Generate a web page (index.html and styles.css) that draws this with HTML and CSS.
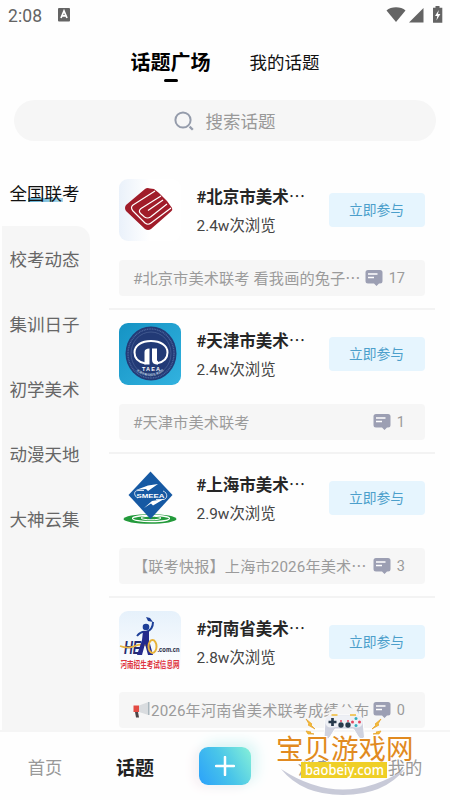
FILE: index.html
```html
<!DOCTYPE html>
<html lang="zh-CN">
<head>
    <meta charset="UTF-8">
    <meta name="viewport" content="width=device-width, initial-scale=1.0">
    <title>话题广场</title>
    <link rel="stylesheet" href="styles.css">
</head>
<body>

<svg width="0" height="0" class="defs">
    <symbol id="comment" viewBox="0 0 18 18">
        <path d="M3 1h12q2.500 0 2.500 2.500v8.500q0 2.500-2.500 2.500h-1l-2.500 2.500-2.500-2.500H3Q.5 14.500.5 12V3.500Q.5 1 3 1z" fill="#9c9fb3"/>
        <path d="M3 5h9.500M3 8.500h6" stroke="#fff" stroke-width="1.300"/>
    </symbol>
</svg>

<!-- Status bar -->
<header class="status-bar">
    <span class="time">2:08</span>
    <svg class="app-badge" width="12" height="14" viewBox="0 0 12 14">
        <rect width="12" height="13.500" rx="1" fill="#646464"/>
        <path d="M3 10 6 3l3 7M4.200 7.800h3.600" fill="none" stroke="#fff" stroke-width="1.700"/>
    </svg>
    <svg class="signals" width="57" height="18" viewBox="0 0 57 18">
        <path d="M.5 4.500C5 .2 15 .2 19.500 4.500L10 16z" fill="#646464"/>
        <path d="M37.500 2v14.500H23z" fill="#646464"/>
        <path d="M49.500 0h4v1.700h2.800v15H47v-15h2.500z" fill="#646464"/>
        <path d="M52.800 4 49 10h2.300l-.9 4.500L54.400 8H52z" fill="#fff"/>
    </svg>
</header>

<!-- Tabs -->
<nav class="tabs">
    <a class="tab active">话题广场</a>
    <a class="tab">我的话题</a>
</nav>

<div class="search">
    <svg width="20" height="20" viewBox="0 0 20 20" fill="none" stroke="#959cab" stroke-width="2">
        <circle cx="9" cy="9" r="7.600"/>
        <path d="m15.600 15.600 3.200 3.200" stroke-width="2.300"/>
    </svg>
    <span>搜索话题</span>
</div>

<main class="content">
    <aside class="sidebar">
        <div class="category current"><span>全国联考</span></div>
        <div class="category-list">
            <div class="category">校考动态</div>
            <div class="category">集训日子</div>
            <div class="category">初学美术</div>
            <div class="category">动漫天地</div>
            <div class="category">大神云集</div>
        </div>
    </aside>

    <section class="topics">
        <article class="topic">
            <div class="topic-head">
                <svg class="avatar" viewBox="0 0 62 62">
                    <defs>
                        <linearGradient id="bj" x2="1"><stop stop-color="#eaf1fa"/><stop offset=".5" stop-color="#fff"/></linearGradient>
                    </defs>
                    <rect width="62" height="62" fill="url(#bj)"/>
                    <path d="M26 10q2-1.500 5-.5l4 .5 5 4 4 4 4 4 5 7q1 2-1 3.500L32 50q-3 2-6 0L7 32q-2-3 0-6z" fill="#a01c2a"/>
                    <g fill="none" stroke="#fff" stroke-width="1.200" stroke-linejoin="round">
                        <path d="M36 12 14 26q-3 2.500 0 6l12 12q3 2.500 6 0l20-15"/>
                        <path d="M42 17 22 29.500q-3 2.500-.5 5l4 3.500q3 2 6 0L48 25"/>
                        <path d="M44 21 29 31.500"/>
                    </g>
                </svg>
                <div class="info">
                    <h2>#北京市美术<span class="dots">…</span></h2>
                    <p>2.4w次浏览</p>
                </div>
                <button class="join">立即参与</button>
            </div>
            <div class="post">
                <span class="post-text">#北京市美术联考 看我画的兔子<span class="dots">…</span></span>
                <svg class="comment"><use href="#comment"/></svg>
                <span class="count">17</span>
            </div>
        </article>

        <article class="topic">
            <div class="topic-head">
                <svg class="avatar" viewBox="0 0 62 62">
                    <defs>
                        <path id="ring" d="M10.500 32a20.500 21 0 0 0 41 0"/>
                        <linearGradient id="tj" x2="1" y2="1"><stop stop-color="#1593c4"/><stop offset="1" stop-color="#32b2df"/></linearGradient>
                    </defs>
                    <rect width="62" height="62" fill="url(#tj)"/>
                    <ellipse cx="32" cy="30.500" rx="25.500" ry="27" fill="#223a76"/>
                    <ellipse cx="32" cy="30.500" rx="23" ry="24.500" fill="none" stroke="#4d669d" stroke-width="1.400" stroke-dasharray="1 .7"/>
                    <ellipse cx="32" cy="30.500" rx="20" ry="21.500" fill="none" stroke="#566d9f" stroke-width=".6"/>
                    <path d="M26.500 40.500C18 39 15.500 34 15.500 29.500c0-7 7-11.500 16.500-11.500s16.500 4.500 16.500 11.500c0 4.500-2.500 9.500-11 11" fill="none" stroke="#fff" stroke-width="2"/>
                    <path d="M25.500 41.500V29q0-3.500 5-3.500v16zM39 41.500q-6 0-6-4.500V25.500h5V37q0 1 1 1z" fill="#fff"/>
                    <text x="32" y="48" text-anchor="middle" font-size="5.500" font-weight="700" fill="#fff" textLength="18">TAEA</text>
                    <text font-size="3" fill="#dce4f2"><textPath href="#ring" startOffset="27%">天津市教育招生考试院</textPath></text>
                </svg>
                <div class="info">
                    <h2>#天津市美术<span class="dots">…</span></h2>
                    <p>2.4w次浏览</p>
                </div>
                <button class="join">立即参与</button>
            </div>
            <div class="post">
                <span class="post-text">#天津市美术联考</span>
                <svg class="comment"><use href="#comment"/></svg>
                <span class="count">1</span>
            </div>
        </article>

        <article class="topic">
            <div class="topic-head">
                <svg class="avatar" viewBox="0 0 62 62">
                    <ellipse cx="31" cy="52" rx="26.500" ry="4.800" fill="#239a3b"/>
                    <ellipse cx="32" cy="51.500" rx="18.500" ry="3.100" fill="none" stroke="#fff" stroke-width="1.200"/>
                    <ellipse cx="32" cy="51" rx="10" ry="1.800" fill="none" stroke="#fff"/>
                    <path d="M31.500 4.500 53.500 28 31.500 52 9.500 28z" fill="#1659a3"/>
                    <path d="M17 23 29 18.500 39 17 29 24 27 22zM25 41l8-7 12-2-11 6.500-2-2z" fill="#fff"/>
                    <path d="M25 23.500h-6c-5 0-4 6 0 7.500M37 32.500h7c5 0 5-7 0-8.500" fill="none" stroke="#fff" stroke-width=".8"/>
                    <text x="31.500" y="30.500" text-anchor="middle" font-size="6" font-weight="700" fill="#fff" textLength="28" lengthAdjust="spacingAndGlyphs">SMEEA</text>
                </svg>
                <div class="info">
                    <h2>#上海市美术<span class="dots">…</span></h2>
                    <p>2.9w次浏览</p>
                </div>
                <button class="join">立即参与</button>
            </div>
            <div class="post">
                <span class="post-text">【联考快报】上海市2026年美术<span class="dots">…</span></span>
                <svg class="comment"><use href="#comment"/></svg>
                <span class="count">3</span>
            </div>
        </article>

        <article class="topic">
            <div class="topic-head">
                <svg class="avatar" viewBox="0 0 62 62">
                    <defs>
                        <linearGradient id="hn" x2="0" y2="1"><stop stop-color="#e6f1fb"/><stop offset="1" stop-color="#fff"/></linearGradient>
                    </defs>
                    <rect width="62" height="62" fill="url(#hn)"/>
                    <text x="5" y="43" font-size="19" font-weight="700" font-style="italic" fill="#232a70" textLength="17" lengthAdjust="spacingAndGlyphs">HE</text>
                    <path d="M1 35q8 3 15 0t15 1" fill="none" stroke="#e8b33c" stroke-width="1.700"/>
                    <circle cx="27" cy="16" r="3.300" fill="#1d3f98"/>
                    <path d="m27 6 4 1 3 4-5-1z" fill="#1d3f98"/>
                    <path d="M18 25q4-5 9-4 7-2 7-10" fill="none" stroke="#1d3f98" stroke-width="2"/>
                    <path d="M24 20h6v9l4 15h-5l-3-11-3 11h-5l5-15z" fill="#232a8c"/>
                    <ellipse cx="33.500" cy="35.500" rx="4" ry="6.500" fill="none" stroke="#e8b33c" stroke-width="2"/>
                    <text x="38.500" y="41" font-size="8" font-weight="700" fill="#20233c" textLength="22" lengthAdjust="spacingAndGlyphs">.com.cn</text>
                    <text x="1.500" y="56.500" font-size="9" font-weight="700" fill="#df3440" textLength="59" lengthAdjust="spacingAndGlyphs">河南招生考试信息网</text>
                </svg>
                <div class="info">
                    <h2>#河南省美术<span class="dots">…</span></h2>
                    <p>2.8w次浏览</p>
                </div>
                <button class="join">立即参与</button>
            </div>
            <div class="post">
                <svg class="horn" width="18" height="16" viewBox="0 0 18 16">
                    <path d="M6 3.500 15.500 0v13L6 10z" fill="#d9dcdf"/>
                    <path d="M15 0h1.500v13H15z" fill="#a9b6bd"/>
                    <path d="M.5 3.500H6v6.500H.5z" fill="#e34b43"/>
                    <path d="M2 10h3l1 5.500H3z" fill="#4b4447"/>
                </svg>
                <span class="post-text">2026年河南省美术联考成绩公布</span>
                <svg class="comment"><use href="#comment"/></svg>
                <span class="count">0</span>
            </div>
        </article>
    </section>
</main>

<!-- Bottom navigation -->
<footer class="bottom-nav">
    <a>首页</a>
    <a class="active">话题</a>
    <a class="add">
        <svg width="20" height="20" viewBox="0 0 20 20" stroke="#fff" stroke-width="2.500" stroke-linecap="round">
            <path d="M10 1v18M1 10h18"/>
        </svg>
    </a>
    <a>消息</a>
    <a>我的</a>
</footer>

<!-- Site mark over the bottom right corner -->
<svg class="site-mark" width="165" height="100" viewBox="0 0 165 100">
    <path d="M16 69Q78 110 140 69 119 95 78 95 37 95 16 69z" fill="#c8cad8"/>
    <ellipse cx="79" cy="15" rx="15" ry="8" fill="#f4f4f5"/>
    <path d="M66 15h26q5 0 6 6l1.500 16q-3 4-6 0l-5-8H70l-5 8q-3 4-6 0L60 21q1-6 6-6z" fill="#cfd2df" stroke="#fff"/>
    <path d="M65 15.500h28q5 1 5 6.500-1 6-7 5.500l-4-.5H71l-4 .5q-6 .5-7-5.500 0-5.500 5-6.500z" fill="#eef0f5"/>
    <path d="M66.500 15h6M85 15h6" stroke="#efb936" stroke-width="1.500"/>
    <path d="M67.500 18v8M63.500 22h8" stroke="#283a4c" stroke-width="2.700"/>
    <circle cx="76" cy="25" r="2.700" fill="#283a4c"/>
    <circle cx="83" cy="25" r="2.700" fill="#283a4c"/>
    <circle cx="76" cy="21" r="1" fill="#e5455e"/>
    <circle cx="83" cy="21" r="1" fill="#e5455e"/>
    <circle cx="91" cy="18.500" r="1.500" fill="#35adbd"/>
    <circle cx="91" cy="25.500" r="1.500" fill="#35adbd"/>
    <circle cx="87.500" cy="22" r="1.500" fill="#e5455e"/>
    <circle cx="94.500" cy="22" r="1.500" fill="#e5455e"/>
    <path d="m41 19 6 5-1 1 4 4-7-4 1-1zM41 31l5 1-1 1 4 1-6 0zM116 19l-6 5 1 1-4 4 7-4-1-1zM116 31l-5 1 1 1-4 1h6z" fill="#f5bc35" stroke="#e5a126" stroke-width=".7"/>
    <text class="mark-name" x="11" y="58.500">宝贝游戏网</text>
    <rect x="36" y="62" width="86" height="16" fill="#efcf27"/>
    <text class="mark-url" x="40" y="74.500" textLength="79" lengthAdjust="spacingAndGlyphs">baobeiy.com</text>
</svg>

</body>
</html>
```

FILE: styles.css
```css
* {
    box-sizing: border-box;
}

body {
    font-family: Roboto, "Noto Sans CJK SC", sans-serif;
    margin: 0;
    height: 800px;
    display: flex;
    flex-direction: column;
    position: relative;
    overflow: hidden;
    background-color: #fefefe;
    color: #333;
}

h2,
p {
    margin: 0;
}

svg {
    display: block;
    flex-shrink: 0;
}

.defs {
    position: absolute;
}

.dots {
    font-family: "Noto Sans CJK SC", sans-serif;
    font-weight: 400;
}

/* Status bar */
.status-bar {
    height: 32px;
    flex-shrink: 0;
    display: flex;
    align-items: center;
    padding: 0 7px 2px 8px;
    color: #646464;
}

.time {
    font-size: 17.5px;
    letter-spacing: 0.1px;
    padding-top: 2px;
}

.app-badge {
    margin-left: 16px;
}

.signals {
    margin-left: auto;
}

/* Tabs */
.tabs {
    height: 68px;
    flex-shrink: 0;
    display: flex;
    justify-content: center;
    gap: 39px;
    padding-top: 14px;
    color: #111;
}

.tab {
    font-size: 17.5px;
    line-height: 35px;
}

.tab.active {
    display: flex;
    flex-direction: column;
    align-items: center;
    font-size: 20px;
    font-weight: 700;
    color: #000;
}

.tab.active::after {
    content: "";
    width: 14px;
    height: 2.5px;
    border-radius: 2px;
    margin-top: -2px;
    background-color: #000;
}

.search {
    height: 41px;
    flex-shrink: 0;
    margin: 0 14px;
    padding-right: 1px;
    border-radius: 21px;
    background-color: #f6f6f6;
    display: flex;
    align-items: center;
    justify-content: center;
    gap: 12px;
    font-size: 17.5px;
    color: #999;
}

.search span {
    margin-top: -1px;
}

/* Content */
.content {
    height: 589px;
    flex-shrink: 0;
    display: flex;
    overflow: hidden;
    padding-top: 20px;
}

.sidebar {
    width: 90px;
    display: flex;
    flex-direction: column;
    margin-right: 19px;
}

.category {
    height: 65px;
    display: flex;
    align-items: center;
    padding-left: 9.5px;
    padding-bottom: 1px;
    font-size: 17.5px;
    color: #666;
}

.category.current {
    color: #111;
    padding-bottom: 0;
}

.category.current span {
    line-height: 26px;
    background: linear-gradient(90deg, #5fadd0, #a9d7eb) 18px 17px / 35px 4px no-repeat;
}

.category-list {
    flex: 1;
    margin-left: 2px;
    border-top-right-radius: 14px;
    background-color: #f6f6f6;
}

.category-list .category {
    padding-left: 7.5px;
}

.topics {
    width: 326px;
    padding-top: 5px;
}

.topic {
    height: 144px;
    padding: 13px 10px 0;
    border-bottom: 2px solid #f3f3f3;
}

.topic-head {
    display: flex;
    align-items: center;
    height: 62px;
}

.avatar {
    width: 62px;
    height: 62px;
    border-radius: 9px;
    font-family: "Liberation Sans", "Noto Sans CJK SC", sans-serif;
}

.info {
    margin-left: 15.5px;
    padding-top: 2px;
    width: 132.5px;
    white-space: nowrap;
}

.info h2 {
    font-size: 16.5px;
    line-height: 28px;
    color: #262626;
}

.info p {
    font-size: 15.4px;
    line-height: 28px;
    color: #444;
}

.join {
    width: 96px;
    height: 34px;
    padding: 0 1px 2px 0;
    border: none;
    border-radius: 4px;
    background-color: #e6f5fe;
    font-family: inherit;
    font-size: 13.8px;
    color: #4c9fcb;
}

.post {
    height: 36px;
    margin-top: 19px;
    padding: 0 20px 0 14px;
    border-radius: 4px;
    background-color: #f6f6f6;
    display: flex;
    align-items: center;
    font-size: 15.2px;
    color: #9b9b9b;
    white-space: nowrap;
}

.post-text {
    margin-top: -2px;
    letter-spacing: 0.12px;
}

.comment {
    width: 18px;
    height: 18px;
    margin-left: auto;
}

.count {
    margin-left: 6px;
    font-size: 14.5px;
}

/* Bottom navigation */
.bottom-nav {
    height: 71px;
    flex-shrink: 0;
    display: grid;
    grid-template-columns: repeat(5, 90px);
    align-items: center;
    justify-items: center;
    border-top: 2px solid #f5f5f5;
    background-color: #fefefe;
    font-size: 17.3px;
    color: #999;
}

.bottom-nav .active {
    font-size: 19px;
    font-weight: 700;
    color: #222;
}

.add {
    width: 52px;
    height: 38px;
    border-radius: 9px;
    display: flex;
    align-items: center;
    justify-content: center;
    margin-top: -2px;
    background: linear-gradient(60deg, #2ba1fa, #49c5e9 50%, #86f0d8);
    box-shadow: 5px -4px 14px #d5f5f5, -5px 2px 12px #f9eef2;
}

.site-mark {
    position: absolute;
    left: 265px;
    top: 700px;
}

.mark-name {
    font-family: "Noto Sans CJK SC", sans-serif;
    font-size: 27.5px;
    font-weight: 400;
    fill: #e18a20;
    stroke: #fff;
    stroke-width: 2px;
    paint-order: stroke;
}

.mark-url {
    font-family: "Noto Sans", sans-serif;
    font-size: 14.5px;
    font-weight: 500;
    fill: #fff;
}
```
